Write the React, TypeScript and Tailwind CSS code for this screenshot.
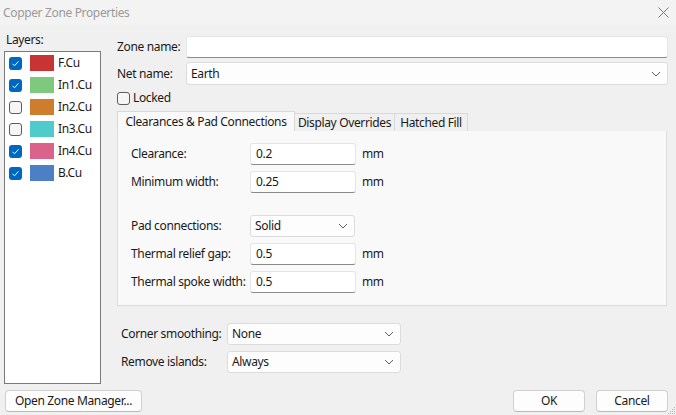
import React from "react";

const layers = [
  { name: "F.Cu", color: "#c83434", checked: true },
  { name: "In1.Cu", color: "#7fc97f", checked: true },
  { name: "In2.Cu", color: "#ce7d2c", checked: false },
  { name: "In3.Cu", color: "#4fcbcb", checked: false },
  { name: "In4.Cu", color: "#db628b", checked: true },
  { name: "B.Cu", color: "#4d7fc4", checked: true },
];

function Check({ checked }: { checked: boolean }) {
  if (checked) {
    return (
      <div className="w-[13px] h-[13px] rounded-[3px] bg-[#0067c0] flex items-center justify-center shrink-0">
        <svg width="9" height="9" viewBox="0 0 9 9">
          <path d="M1.5 4.8 L3.5 6.8 L7.5 2.3" fill="none" stroke="#ffffff" strokeWidth="1" />
        </svg>
      </div>
    );
  }
  return <div className="w-[13px] h-[13px] rounded-[3px] border border-[#5d5d5d] bg-[#f6f6f6] shrink-0" />;
}

function Chevron() {
  return (
    <svg width="10" height="6" viewBox="0 0 10 6" className="shrink-0">
      <path d="M1 1 L5 5 L9 1" fill="none" stroke="#606060" strokeWidth="1" />
    </svg>
  );
}

function TextInput({ value, w }: { value: string; w: string }) {
  return (
    <div className={`${w} h-[22px] bg-white border border-[#e5e5e5] border-b-[#8a8a8a] rounded-[3px] flex items-center px-[5px] text-[#1a1a1a]`}>
      {value}
    </div>
  );
}

function Select({ value, w, h = "h-[22px]" }: { value: string; w: string; h?: string }) {
  return (
    <div className={`${w} ${h} bg-[#fdfdfd] border border-[#dcdcdc] rounded-[3px] flex items-center justify-between pl-[4px] pr-[6px] text-[#1a1a1a]`}>
      <span>{value}</span>
      <Chevron />
    </div>
  );
}

function Row({ label, children }: { label: string; children: React.ReactNode }) {
  return (
    <div className="flex items-center">
      <div className="w-[119px] shrink-0">{label}</div>
      {children}
    </div>
  );
}

export default function App() {
  return (
    <div
      className="relative w-[676px] h-[415px] bg-[#f0f0f0] text-[12px] tracking-[-0.35px] text-[#1a1a1a] whitespace-nowrap flex flex-col overflow-hidden"
      style={{ fontFamily: '"Noto Sans", "Open Sans", sans-serif' }}
    >
      {/* Title bar */}
      <div className="h-[25px] bg-[#f3f3f3] flex items-center justify-between pl-[3px] pr-[7px] shrink-0">
        <span className="text-[12px] text-[#9a9a9a]">Copper Zone Properties</span>
        <svg width="11" height="11" viewBox="0 0 11 11">
          <path d="M0.5 0.5 L10.5 10.5 M10.5 0.5 L0.5 10.5" stroke="#7a7a7a" strokeWidth="1" />
        </svg>
      </div>

      {/* Body */}
      <div className="flex flex-1 pl-[4px] pr-[8px]">
        {/* Layers */}
        <div className="w-[97px] flex flex-col shrink-0">
          <div className="h-[26px] flex items-end pb-[5px] pl-[2px] leading-none">Layers:</div>
          <div className="h-[333px] bg-white border border-[#7a7a7a] flex flex-col">
            {layers.map((l) => (
              <div key={l.name} className="h-[22px] flex items-center pl-[4px]">
                <Check checked={l.checked} />
                <div className="w-[24px] h-[16px] ml-[8px]" style={{ backgroundColor: l.color }} />
                <span className="ml-[4px]">{l.name}</span>
              </div>
            ))}
          </div>
        </div>

        {/* Right */}
        <div className="flex-1 ml-[16px] flex flex-col pt-[11px]">
          <div className="flex items-center h-[22px]">
            <div className="w-[69px] shrink-0">Zone name:</div>
            <TextInput value="" w="flex-1" />
          </div>
          <div className="flex items-center h-[23px] mt-[4px]">
            <div className="w-[69px] shrink-0">Net name:</div>
            <Select value="Earth" w="flex-1" h="h-[23px]" />
          </div>
          <div className="flex items-center mt-[6px] h-[14px]">
            <div className="w-[13px] h-[13px] rounded-[3px] border border-[#5d5d5d] bg-[#f6f6f6]" />
            <span className="ml-[3px]">Locked</span>
          </div>

          {/* Tabs */}
          <div className="flex items-end mt-[6px] h-[20px]">
            <div className="h-[20px] w-[178px] bg-[#f9f9f9] border border-b-0 border-[#d9d9d9] flex items-center justify-center">
              Clearances &amp; Pad Connections
            </div>
            <div className="h-[18px] w-[100px] bg-[#f0f0f0] border border-b-0 border-l-0 border-[#d9d9d9] flex items-center justify-center">
              Display Overrides
            </div>
            <div className="h-[18px] w-[73px] bg-[#f0f0f0] border border-b-0 border-l-0 border-[#d9d9d9] flex items-center justify-center">
              Hatched Fill
            </div>
          </div>
          <div className="h-[175px] w-[550px] bg-[#f9f9f9] border border-t-0 border-[#dcdcdc] pl-[13px] pt-[12px] flex flex-col">
            <Row label="Clearance:">
              <TextInput value="0.2" w="w-[106px]" />
              <span className="ml-[6px]">mm</span>
            </Row>
            <div className="mt-[6px]">
              <Row label="Minimum width:">
                <TextInput value="0.25" w="w-[106px]" />
                <span className="ml-[6px]">mm</span>
              </Row>
            </div>
            <div className="mt-[22px]">
              <Row label="Pad connections:">
                <Select value="Solid" w="w-[105px]" />
              </Row>
            </div>
            <div className="mt-[6px]">
              <Row label="Thermal relief gap:">
                <TextInput value="0.5" w="w-[106px]" />
                <span className="ml-[6px]">mm</span>
              </Row>
            </div>
            <div className="mt-[6px]">
              <Row label="Thermal spoke width:">
                <TextInput value="0.5" w="w-[106px]" />
                <span className="ml-[6px]">mm</span>
              </Row>
            </div>
          </div>

          <div className="flex items-center mt-[17px] pl-[4px]">
            <div className="w-[106px] shrink-0">Corner smoothing:</div>
            <Select value="None" w="w-[174px]" />
          </div>
          <div className="flex items-center mt-[6px] pl-[4px]">
            <div className="w-[106px] shrink-0">Remove islands:</div>
            <Select value="Always" w="w-[174px]" />
          </div>
        </div>
      </div>

      {/* Bottom buttons */}
      <div className="h-[25px] flex items-start pl-[5px] pr-[8px] shrink-0">
        <div className="h-[22px] w-[137px] bg-[#fdfdfd] border border-[#d0d0d0] border-b-[#b8b8b8] rounded-[4px] flex items-center justify-center">
          Open Zone Manager...
        </div>
        <div className="flex-1" />
        <div className="h-[22px] w-[72px] bg-[#fdfdfd] border border-[#d0d0d0] border-b-[#b8b8b8] rounded-[4px] flex items-center justify-center">
          OK
        </div>
        <div className="h-[22px] w-[72px] ml-[11px] bg-[#fdfdfd] border border-[#d0d0d0] border-b-[#b8b8b8] rounded-[4px] flex items-center justify-center">
          Cancel
        </div>
      </div>

      {/* Resize grip */}
      <svg width="8" height="8" viewBox="0 0 8 8" className="absolute right-[0px] bottom-[0px]">
        <rect x="6" y="0" width="1" height="1" fill="#b0b0b0" />
        <rect x="4" y="2" width="1" height="1" fill="#b0b0b0" />
        <rect x="6" y="2" width="1" height="1" fill="#b0b0b0" />
        <rect x="2" y="4" width="1" height="1" fill="#b0b0b0" />
        <rect x="4" y="4" width="1" height="1" fill="#b0b0b0" />
        <rect x="6" y="4" width="1" height="1" fill="#b0b0b0" />
        <rect x="0" y="6" width="1" height="1" fill="#b0b0b0" />
        <rect x="2" y="6" width="1" height="1" fill="#b0b0b0" />
        <rect x="4" y="6" width="1" height="1" fill="#b0b0b0" />
        <rect x="6" y="6" width="1" height="1" fill="#b0b0b0" />
      </svg>
    </div>
  );
}
